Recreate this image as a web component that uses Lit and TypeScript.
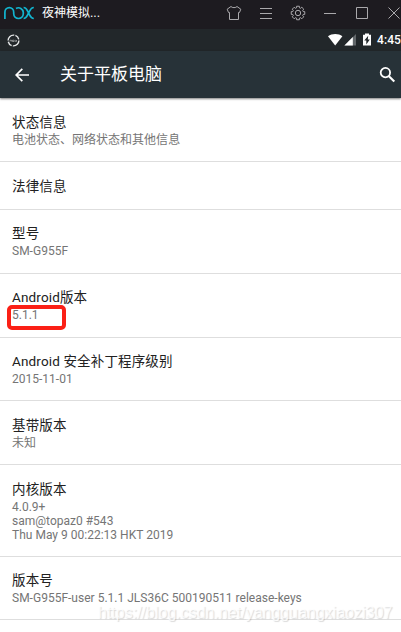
import { LitElement, html, css } from "lit";
import { customElement } from "lit/decorators.js";

interface Item {
  title: string;
  lines: string[];
  height: number;
  pad: number;
  marked?: boolean;
}

const ITEMS: Item[] = [
  { title: "状态信息", lines: ["电池状态、网络状态和其他信息"], height: 64, pad: 15 },
  { title: "法律信息", lines: [], height: 48, pad: 15 },
  { title: "型号", lines: ["SM-G955F"], height: 64, pad: 14 },
  { title: "Android版本", lines: ["5.1.1"], height: 64, pad: 14, marked: true },
  { title: "Android 安全补丁程序级别", lines: ["2015-11-01"], height: 63, pad: 14 },
  { title: "基带版本", lines: ["未知"], height: 64, pad: 15 },
  { title: "内核版本", lines: ["4.0.9+", "sam@topaz0 #543", "Thu May 9 00:22:13 HKT 2019"], height: 92, pad: 15 },
  { title: "版本号", lines: ["SM-G955F-user 5.1.1 JLS36C 500190511 release-keys"], height: 63, pad: 14 },
];

// Outline of an eight-toothed cog centred in a 16px box.
const GEAR = (() => {
  const pts: string[] = [];
  const steps: [number, number][] = [[-0.27, 5.4], [-0.2, 6.9], [0.2, 6.9], [0.27, 5.4]];
  for (let i = 0; i < 8; i++) {
    for (const [d, r] of steps) {
      const a = (i * Math.PI) / 4 + d;
      pts.push(`${(8 + r * Math.sin(a)).toFixed(2)} ${(8 - r * Math.cos(a)).toFixed(2)}`);
    }
  }
  return "M" + pts.join("L") + "Z";
})();

@customElement("app-root")
export class AppRoot extends LitElement {
  static styles = css`
    :host {
      display: block;
      position: relative;
      width: 401px;
      height: 632px;
      overflow: hidden;
      background: #fff;
      font-family: Roboto, "Noto Sans CJK SC", sans-serif;
    }
    svg { display: block; flex: none; }
    .window {
      display: flex;
      align-items: center;
      height: 29px;
      box-sizing: border-box;
      padding: 0 0 3px 4px;
      background: #1d1b20;
    }
    .name {
      margin-left: 8px;
      flex: 1;
      color: #fff;
      font: 12px/16px "Liberation Sans", "Noto Sans CJK SC", sans-serif;
      white-space: nowrap;
    }
    .controls { display: flex; gap: 16px; margin-right: -1px; }
    .status {
      display: flex;
      align-items: center;
      height: 22px;
      padding-left: 7px;
      background: #22272a;
    }
    .signals { margin-left: auto; }
    .clock {
      width: 24px;
      margin-left: 5px;
      color: #fff;
      font-size: 12px;
      font-weight: 500;
      line-height: 22px;
      letter-spacing: 0.1px;
      white-space: nowrap;
    }
    .bar {
      display: flex;
      align-items: center;
      height: 47px;
      padding: 0 5px 0 14px;
      background: #273238;
      box-shadow: 0 1px 2px rgba(0, 0, 0, 0.5);
      position: relative;
    }
    .heading {
      flex: 1;
      margin: 0 0 2px 30px;
      color: #fff;
      font-size: 17px;
      line-height: 24px;
    }
    .item {
      box-sizing: border-box;
      padding: 0 12px;
      border-bottom: 1px solid #dedede;
    }
    .title {
      color: #212121;
      font-size: 13.5px;
      line-height: 18px;
      letter-spacing: 0.15px;
      white-space: nowrap;
    }
    .summary {
      position: relative;
      margin-top: 2px;
      color: #757575;
      font-size: 12px;
      line-height: 14px;
      letter-spacing: 0.01px;
      white-space: nowrap;
    }
    .line { height: 14px; }
    .mark {
      position: absolute;
      left: -5.5px;
      top: -3px;
      width: 59px;
      height: 25px;
      box-sizing: border-box;
      border: 4px solid #fb2016;
      border-radius: 5px;
    }
    .watermark {
      position: absolute;
      left: 98px;
      top: 603px;
      color: rgba(255, 255, 255, 0.75);
      text-shadow: 1px 1px 1px rgba(0, 0, 0, 0.15);
      font: 16px/20px "Liberation Sans", sans-serif;
      white-space: nowrap;
    }
  `;

  render() {
    return html`
      <div class="window">
        <svg width="30" height="14" viewBox="0 0 30 14" fill="none" stroke="#12b5cf" stroke-width="1.7">
          <path d="M.9 13V6.2A4.4 4.6 0 0 1 9.7 6.2V7.6A4.8 4.9 0 0 0 19.3 7.6V6.6A4.8 4.8 0 0 0 12 2.5" />
          <path d="M19.6 1.5C22.6 1.5 22.8 3.6 24.6 7C26.4 10.4 26.8 12.5 29.8 12.5M29.8 1.5C26.8 1.5 26.4 3.6 24.6 7C22.8 10.4 22.6 12.5 19.6 12.5" />
        </svg>
        <span class="name">夜神模拟...</span>
        <div class="controls">
          <svg width="16" height="16" viewBox="0 0 16 16" fill="none" stroke="#aaa9ac">
            <path d="M5 1.5L1.2 4.2L2.5 7.5H3.5V14.5H12.5V7.5H13.5L14.8 4.2L11 1.5C10.2 3 5.8 3 5 1.5Z" />
          </svg>
          <svg width="16" height="16" viewBox="0 0 16 16" stroke="#aaa9ac"><path d="M2 3.5H14M2 8.5H14M2 13.5H14" /></svg>
          <svg width="16" height="16" viewBox="0 0 16 16" fill="none" stroke="#aaa9ac">
            <path d=${GEAR} stroke-linejoin="round" /><circle cx="8" cy="8" r="2.7" />
          </svg>
          <svg width="16" height="16" viewBox="0 0 16 16" stroke="#aaa9ac"><path d="M2 8.5H14" /></svg>
          <svg width="16" height="16" viewBox="0 0 16 16" fill="none" stroke="#aaa9ac"><path d="M2.5 2.5H13.5V13.5H2.5Z" /></svg>
          <svg width="16" height="16" viewBox="0 0 16 16" stroke="#aaa9ac"><path d="M2.5 2.5L13.5 13.5M13.5 2.5L2.5 13.5" /></svg>
        </div>
      </div>
      <div class="status">
        <svg width="13" height="13" viewBox="0 0 13 13" fill="none" stroke="#e4e6e7">
          <circle cx="6.5" cy="6.5" r="5.4" stroke-width="1.4" stroke-dasharray="9 1.2 5 1.4" />
          <path d="M3 7.5V6.2H4.5V7.5M5.5 6.2H7.2V7.5H5.5ZM8.2 6L10 7.8M10 6L8.2 7.8" stroke-width=".7" opacity=".7" />
        </svg>
        <svg class="signals" width="44" height="14" viewBox="0 0 44 14">
          <path d="M0 3.2C4 .1 10.5 .1 14.4 3.2L7.2 12.4Z" fill="#fff" />
          <path d="M28 1V12.4H16.4Z" fill="#62676a" />
          <path d="M24.8 4.1V12.4H16.4Z" fill="#fff" />
          <path d="M35 1.7H37V.6H41V1.7H43V12.6H35Z" fill="#fff" />
          <path d="M40.2 2.8L36.3 7.6H38.3V11.4L41.8 6.4H39.8Z" fill="#22272a" />
        </svg>
        <span class="clock">4:45</span>
      </div>
      <div class="bar">
        <svg width="16" height="16" viewBox="0 0 16 16" fill="none" stroke="#fff" stroke-width="1.7">
          <path d="M15 8H2.5M8.3 1.9L2.2 8L8.3 14.1" />
        </svg>
        <span class="heading">关于平板电脑</span>
        <svg width="18" height="18" viewBox="0 0 18 18" fill="none" stroke="#fff">
          <circle cx="7.4" cy="6.6" r="4.7" stroke-width="1.8" /><path d="M10.7 9.9L16.3 15.5" stroke-width="2.1" />
        </svg>
      </div>
      <div class="list">
        ${ITEMS.map((it) => html`
          <div class="item" style="height:${it.height}px;padding-top:${it.pad}px">
            <div class="title">${it.title}</div>
            ${it.lines.length
              ? html`<div class="summary">
                  ${it.lines.map((l) => html`<div class="line">${l}</div>`)}
                  ${it.marked ? html`<div class="mark"></div>` : ""}
                </div>`
              : ""}
          </div>`)}
      </div>
      <div class="watermark">https://blog.csdn.net/yangguangxiaozi307</div>
    `;
  }
}
